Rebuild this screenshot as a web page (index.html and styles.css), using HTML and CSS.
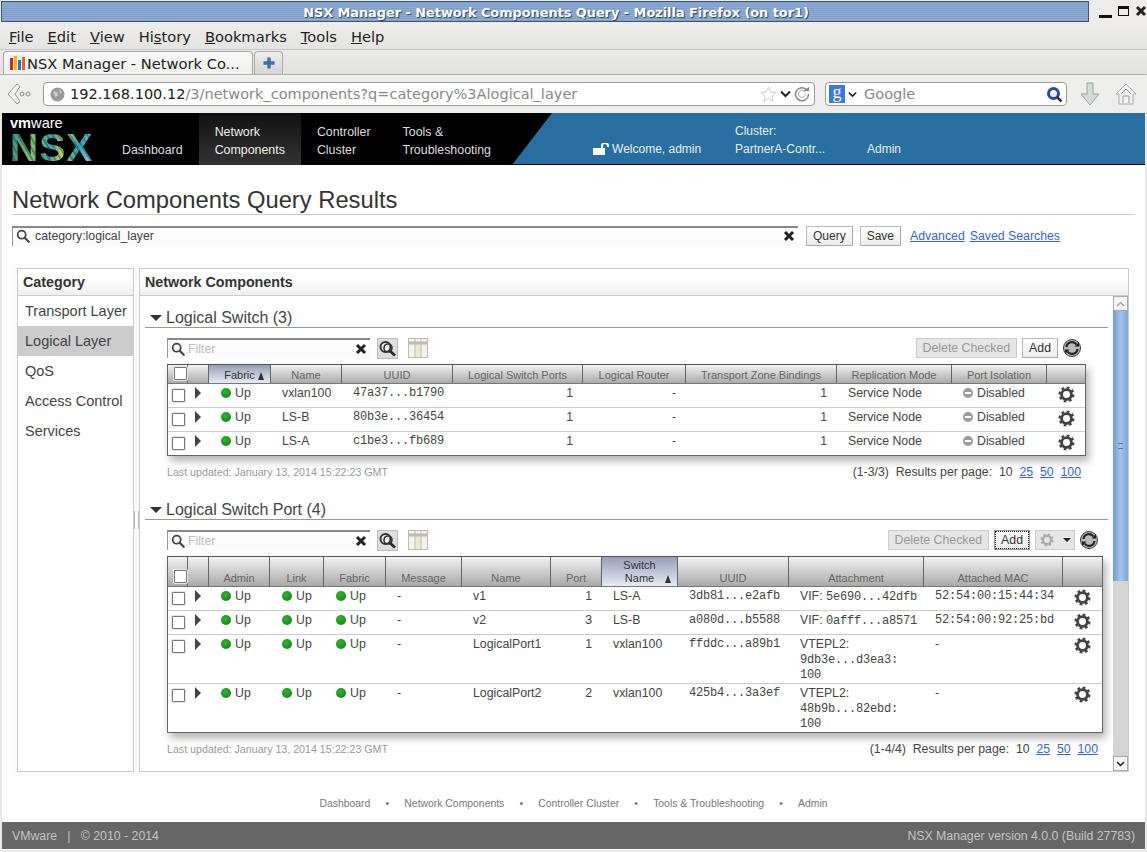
FILE: index.html
```html
<!DOCTYPE html>
<html lang="en">
<head>
    <meta charset="UTF-8">
    <title>NSX Manager - Network Components Query</title>
    <link rel="stylesheet" href="styles.css">
</head>
<body>

    <!-- shared icons -->
    <svg class="defs" width="0" height="0">
        <symbol id="i-gear" viewBox="0 0 18 18">
            <circle cx="9" cy="9" r="5.2" fill="none" stroke="#444" stroke-width="3"/>
            <circle cx="9" cy="9" r="7.2" fill="none" stroke="#444" stroke-width="2.6" stroke-dasharray="2.9 2.75"/>
        </symbol>
        <symbol id="i-search" viewBox="0 0 16 16">
            <circle cx="6.5" cy="6.5" r="4.6" fill="none" stroke="#444" stroke-width="2"/>
            <path d="M10 10l4.5 4.5" stroke="#444" stroke-width="2.6" stroke-linecap="round"/>
        </symbol>
        <symbol id="i-clear" viewBox="0 0 12 12">
            <path d="M2 2l8 8M10 2l-8 8" stroke="#222" stroke-width="3"/>
        </symbol>
        <symbol id="i-zoom" viewBox="0 0 21 21">
            <rect x=".5" y=".5" width="20" height="20" fill="#ddd" stroke="#bbb"/>
            <circle cx="8.5" cy="9" r="5" fill="#eee" stroke="#333" stroke-width="2"/>
            <circle cx="11" cy="10" r="4" fill="none" stroke="#333" stroke-width="1.6"/>
            <path d="M13 13l5 4.5" stroke="#222" stroke-width="2.6"/>
        </symbol>
        <symbol id="i-cols" viewBox="0 0 20 20">
            <rect x=".5" y=".5" width="19" height="19" fill="#f4f3e6" stroke="#bbb"/>
            <rect x="7" y="5" width="6" height="14" fill="#ece9cf"/>
            <path d="M.5 5h19" stroke="#bbb" stroke-width="3"/>
            <path d="M7 .5v19M13 .5v19" stroke="#bbb"/>
        </symbol>
        <symbol id="i-refresh" viewBox="0 0 18 18">
            <circle cx="9" cy="9" r="8.5" fill="#bbb" stroke="#333"/>
            <path d="M3.5 8A5.5 5.5 0 0 1 13.5 5.5" fill="none" stroke="#222" stroke-width="2.2"/>
            <path d="M14.5 10A5.5 5.5 0 0 1 4.5 12.5" fill="none" stroke="#222" stroke-width="2.2"/>
            <path d="M11.5 7.5h4.5v-4.5zM6.5 10.5h-4.5v4.5z" fill="#222"/>
        </symbol>
    </svg>

    <!-- window title -->
    <div class="titlebar">
        <div class="title">NSX Manager - Network Components Query - Mozilla Firefox (on tor1)</div>
        <div class="winbtns">
            <span class="win-min"></span>
            <span class="win-max"></span>
            <svg width="12" height="12"><use href="#i-clear"/></svg>
        </div>
    </div>

    <div class="menubar">
        <span><u>F</u>ile</span>
        <span><u>E</u>dit</span>
        <span><u>V</u>iew</span>
        <span>Hi<u>s</u>tory</span>
        <span><u>B</u>ookmarks</span>
        <span><u>T</u>ools</span>
        <span><u>H</u>elp</span>
    </div>

    <div class="tabbar">
        <div class="tab">
            <svg class="favicon" width="16" height="16" viewBox="0 0 16 16">
                <rect width="16" height="16" fill="#eee"/>
                <rect x="1" y="3" width="3" height="12" fill="#d9262a"/>
                <rect x="5" y="1" width="3" height="14" fill="#f2b705"/>
                <rect x="9" y="5" width="3" height="10" fill="#2a6fc9"/>
                <rect x="13" y="2" width="3" height="13" fill="#e2672a"/>
            </svg>
            <span>NSX Manager - Network Co...</span>
        </div>
        <div class="newtab">
            <svg width="14" height="14" viewBox="0 0 14 14"><path d="M7 1.5v11M1.5 7h11" stroke="#3d6fb0" stroke-width="3.4"/></svg>
        </div>
    </div>

    <div class="navbar">
        <svg class="back" width="24" height="22" viewBox="0 0 24 22">
            <path d="M10 1L1 11l9 10 3-2.500L8 11l5-7.500z" fill="#f2f2f2" stroke="#999"/>
            <circle cx="15" cy="11" r="2" fill="none" stroke="#888"/>
            <circle cx="21" cy="11" r="2" fill="none" stroke="#888"/>
        </svg>
        <div class="urlbar">
            <svg width="15" height="15" viewBox="0 0 15 15"><circle cx="7.5" cy="7.5" r="7" fill="#999"/><path d="M3 4l4 1 1 4-3 1zM9 2l3 3-2 2z" fill="#ccc"/></svg>
            <span class="url"><b>192.168.100.12</b>/3/network_components?q=category%3Alogical_layer</span>
            <svg width="17" height="16" viewBox="0 0 17 16"><path d="M8.5 1l2.3 4.9 5.2.6-3.900 3.600 1.100 5.200-4.700-2.700-4.700 2.700 1.100-5.200L1 6.500l5.200-.6z" fill="#fff" stroke="#ccc"/></svg>
            <svg width="11" height="8" viewBox="0 0 11 8"><path d="M1 1.500l4.500 4.500L10 1.500" fill="none" stroke="#222" stroke-width="2"/></svg>
            <svg width="16" height="16" viewBox="0 0 16 16"><path d="M13 4a6.500 6.500 0 1 0 1.500 4" fill="none" stroke="#888" stroke-width="1.500"/><path d="M11 6a3.500 3.500 0 1 0 .5 2" fill="none" stroke="#aaa"/><path d="M9 5h6V1z" fill="#888"/></svg>
        </div>
        <div class="searchbar">
            <span class="g-box">g</span>
            <svg width="9" height="7" viewBox="0 0 11 8"><path d="M1 1.500l4.500 4.500L10 1.500" fill="none" stroke="#222" stroke-width="2"/></svg>
            <span class="search-hint">Google</span>
            <svg width="17" height="17" viewBox="0 0 17 17"><circle cx="7.500" cy="7.500" r="5" fill="#eef" stroke="#2a4a9a" stroke-width="3"/><path d="M11 11l4.500 4.500" stroke="#333" stroke-width="2.500"/></svg>
        </div>
        <svg class="nav-down" width="20" height="24" viewBox="0 0 20 24"><path d="M7 1h6v11h6l-9 11-9-11h6z" fill="#d5dcd8" stroke="#9aa39e"/></svg>
        <svg class="nav-home" width="22" height="22" viewBox="0 0 22 22"><path d="M11 1L1 11h3v10h14V11h3z" fill="#f3f3f3" stroke="#aaa"/><path d="M8 20v-7h6v7M6 11l5-5 5 5" fill="none" stroke="#999"/></svg>
    </div>

    <div class="app">
        <div class="topnav">
            <div class="logo">
                <div class="vmware"><b>vm</b>ware</div>
                <div class="nsx">NSX</div>
            </div>
            <div class="nav-item">Dashboard</div>
            <div class="nav-item active">Network<br>Components</div>
            <div class="nav-item">Controller<br>Cluster</div>
            <div class="nav-item">Tools &amp;<br>Troubleshooting</div>
            <div class="nav-blue">
                <div class="welcome">
                    <svg width="17" height="12" viewBox="0 0 17 12"><rect y="5" width="12" height="7" fill="#fff"/><path d="M9 5V3a3 3 0 0 1 6 0v1" fill="none" stroke="#fff" stroke-width="2"/></svg>
                    Welcome, admin
                </div>
                <div class="cluster">Cluster:<br>PartnerA-Contr...</div>
                <div class="admin">Admin</div>
            </div>
        </div>

        <div class="page">
            <h1>Network Components Query Results</h1>

            <div class="query-row">
                <div class="query-box">
                    <svg width="14" height="14"><use href="#i-search"/></svg>
                    <span class="query-text">category:logical_layer</span>
                    <svg width="12" height="12"><use href="#i-clear"/></svg>
                </div>
                <button class="btn">Query</button>
                <button class="btn">Save</button>
                <a class="link" href="#">Advanced</a>
                <a class="link" href="#">Saved Searches</a>
            </div>

            <div class="content">
                <div class="panel cat-panel">
                    <div class="panel-head">Category</div>
                    <div class="cat-item">Transport Layer</div>
                    <div class="cat-item active">Logical Layer</div>
                    <div class="cat-item">QoS</div>
                    <div class="cat-item">Access Control</div>
                    <div class="cat-item">Services</div>
                </div>
                <div class="splitter"></div>
                <div class="panel main-panel">
                    <div class="panel-head">Network Components</div>
                    <div class="scroll-wrap">
                        <div class="scroll-area">

                            <!-- Logical Switch -->
                            <div class="section">
                                <div class="section-head"><span class="down-arrow"></span>Logical Switch (3)</div>
                                <div class="section-body w1">
                                    <div class="toolbar">
                                        <div class="filter">
                                            <svg width="14" height="14"><use href="#i-search"/></svg>
                                            <span class="filter-text">Filter</span>
                                            <svg width="12" height="12"><use href="#i-clear"/></svg>
                                        </div>
                                        <svg class="tool-zoom" width="21" height="21"><use href="#i-zoom"/></svg>
                                        <svg class="tool-cols" width="20" height="20"><use href="#i-cols"/></svg>
                                        <button class="btn disabled push">Delete Checked</button>
                                        <button class="btn">Add</button>
                                        <svg width="18" height="18"><use href="#i-refresh"/></svg>
                                    </div>
                                    <div class="grid">
                                        <table>
                                            <colgroup>
                                                <col class="w20"><col class="w21"><col class="w62"><col class="w71"><col class="w111"><col class="w130"><col class="w103"><col class="w151"><col class="w115"><col class="w95"><col class="w38">
                                            </colgroup>
                                            <thead class="short">
                                                <tr>
                                                    <th class="check-cell"><input type="checkbox"></th>
                                                    <th></th>
                                                    <th class="sorted">Fabric<span class="sort-mark"></span></th>
                                                    <th>Name</th>
                                                    <th>UUID</th>
                                                    <th>Logical Switch Ports</th>
                                                    <th>Logical Router</th>
                                                    <th>Transport Zone Bindings</th>
                                                    <th>Replication Mode</th>
                                                    <th>Port Isolation</th>
                                                    <th></th>
                                                </tr>
                                            </thead>
                                            <tbody>
                                                <tr>
                                                    <td class="check-cell"><input type="checkbox"></td>
                                                    <td class="arrow-cell"><span class="row-arrow"></span></td>
                                                    <td><span class="dot"></span>Up</td>
                                                    <td>vxlan100</td>
                                                    <td class="mono">47a37...b1790</td>
                                                    <td class="num">1</td>
                                                    <td class="num">-</td>
                                                    <td class="num">1</td>
                                                    <td>Service Node</td>
                                                    <td><span class="dot off"></span>Disabled</td>
                                                    <td class="gear-cell"><svg width="17" height="17"><use href="#i-gear"/></svg></td>
                                                </tr>
                                                <tr>
                                                    <td class="check-cell"><input type="checkbox"></td>
                                                    <td class="arrow-cell"><span class="row-arrow"></span></td>
                                                    <td><span class="dot"></span>Up</td>
                                                    <td>LS-B</td>
                                                    <td class="mono">80b3e...36454</td>
                                                    <td class="num">1</td>
                                                    <td class="num">-</td>
                                                    <td class="num">1</td>
                                                    <td>Service Node</td>
                                                    <td><span class="dot off"></span>Disabled</td>
                                                    <td class="gear-cell"><svg width="17" height="17"><use href="#i-gear"/></svg></td>
                                                </tr>
                                                <tr>
                                                    <td class="check-cell"><input type="checkbox"></td>
                                                    <td class="arrow-cell"><span class="row-arrow"></span></td>
                                                    <td><span class="dot"></span>Up</td>
                                                    <td>LS-A</td>
                                                    <td class="mono">c1be3...fb689</td>
                                                    <td class="num">1</td>
                                                    <td class="num">-</td>
                                                    <td class="num">1</td>
                                                    <td>Service Node</td>
                                                    <td><span class="dot off"></span>Disabled</td>
                                                    <td class="gear-cell"><svg width="17" height="17"><use href="#i-gear"/></svg></td>
                                                </tr>
                                            </tbody>
                                        </table>
                                    </div>
                                    <div class="grid-foot">
                                        <span class="updated">Last updated: January 13, 2014 15:22:23 GMT</span>
                                        <span class="pager">(1-3/3)&nbsp; Results per page: &nbsp;10 &nbsp;<a href="#">25</a> &nbsp;<a href="#">50</a> &nbsp;<a href="#">100</a></span>
                                    </div>
                                </div>
                            </div>

                            <!-- Logical Switch Port -->
                            <div class="section">
                                <div class="section-head"><span class="down-arrow"></span>Logical Switch Port (4)</div>
                                <div class="section-body w2">
                                    <div class="toolbar">
                                        <div class="filter">
                                            <svg width="14" height="14"><use href="#i-search"/></svg>
                                            <span class="filter-text">Filter</span>
                                            <svg width="12" height="12"><use href="#i-clear"/></svg>
                                        </div>
                                        <svg class="tool-zoom" width="21" height="21"><use href="#i-zoom"/></svg>
                                        <svg class="tool-cols" width="20" height="20"><use href="#i-cols"/></svg>
                                        <button class="btn disabled push">Delete Checked</button>
                                        <button class="btn focused">Add</button>
                                        <div class="btn disabled gear-menu">
                                            <svg class="faded" width="14" height="14" viewBox="0 0 18 18"><use href="#i-gear"/></svg>
                                            <span class="menu-caret"></span>
                                        </div>
                                        <svg width="18" height="18"><use href="#i-refresh"/></svg>
                                    </div>
                                    <div class="grid">
                                        <table>
                                            <colgroup>
                                                <col class="w20"><col class="w21"><col class="w61"><col class="w54"><col class="w62"><col class="w76"><col class="w89"><col class="w51"><col class="w76"><col class="w111"><col class="w135"><col class="w139"><col class="w39">
                                            </colgroup>
                                            <thead class="tall">
                                                <tr>
                                                    <th class="check-cell"><input type="checkbox"></th>
                                                    <th></th>
                                                    <th>Admin</th>
                                                    <th>Link</th>
                                                    <th>Fabric</th>
                                                    <th>Message</th>
                                                    <th>Name</th>
                                                    <th>Port</th>
                                                    <th class="sorted">Switch<br>Name<span class="sort-mark"></span></th>
                                                    <th>UUID</th>
                                                    <th>Attachment</th>
                                                    <th>Attached MAC</th>
                                                    <th></th>
                                                </tr>
                                            </thead>
                                            <tbody>
                                                <tr>
                                                    <td class="check-cell"><input type="checkbox"></td>
                                                    <td class="arrow-cell"><span class="row-arrow"></span></td>
                                                    <td><span class="dot"></span>Up</td>
                                                    <td><span class="dot"></span>Up</td>
                                                    <td><span class="dot"></span>Up</td>
                                                    <td>-</td>
                                                    <td>v1</td>
                                                    <td class="num">1</td>
                                                    <td>LS-A</td>
                                                    <td class="mono">3db81...e2afb</td>
                                                    <td>VIF: <span class="mono">5e690...42dfb</span></td>
                                                    <td class="mono">52:54:00:15:44:34</td>
                                                    <td class="gear-cell"><svg width="17" height="17"><use href="#i-gear"/></svg></td>
                                                </tr>
                                                <tr>
                                                    <td class="check-cell"><input type="checkbox"></td>
                                                    <td class="arrow-cell"><span class="row-arrow"></span></td>
                                                    <td><span class="dot"></span>Up</td>
                                                    <td><span class="dot"></span>Up</td>
                                                    <td><span class="dot"></span>Up</td>
                                                    <td>-</td>
                                                    <td>v2</td>
                                                    <td class="num">3</td>
                                                    <td>LS-B</td>
                                                    <td class="mono">a080d...b5588</td>
                                                    <td>VIF: <span class="mono">0afff...a8571</span></td>
                                                    <td class="mono">52:54:00:92:25:bd</td>
                                                    <td class="gear-cell"><svg width="17" height="17"><use href="#i-gear"/></svg></td>
                                                </tr>
                                                <tr>
                                                    <td class="check-cell"><input type="checkbox"></td>
                                                    <td class="arrow-cell"><span class="row-arrow"></span></td>
                                                    <td><span class="dot"></span>Up</td>
                                                    <td><span class="dot"></span>Up</td>
                                                    <td><span class="dot"></span>Up</td>
                                                    <td>-</td>
                                                    <td>LogicalPort1</td>
                                                    <td class="num">1</td>
                                                    <td>vxlan100</td>
                                                    <td class="mono">ffddc...a89b1</td>
                                                    <td>VTEPL2:<br><span class="mono">9db3e...d3ea3:<br>100</span></td>
                                                    <td>-</td>
                                                    <td class="gear-cell"><svg width="17" height="17"><use href="#i-gear"/></svg></td>
                                                </tr>
                                                <tr>
                                                    <td class="check-cell"><input type="checkbox"></td>
                                                    <td class="arrow-cell"><span class="row-arrow"></span></td>
                                                    <td><span class="dot"></span>Up</td>
                                                    <td><span class="dot"></span>Up</td>
                                                    <td><span class="dot"></span>Up</td>
                                                    <td>-</td>
                                                    <td>LogicalPort2</td>
                                                    <td class="num">2</td>
                                                    <td>vxlan100</td>
                                                    <td class="mono">425b4...3a3ef</td>
                                                    <td>VTEPL2:<br><span class="mono">48b9b...82ebd:<br>100</span></td>
                                                    <td>-</td>
                                                    <td class="gear-cell"><svg width="17" height="17"><use href="#i-gear"/></svg></td>
                                                </tr>
                                            </tbody>
                                        </table>
                                    </div>
                                    <div class="grid-foot">
                                        <span class="updated">Last updated: January 13, 2014 15:22:23 GMT</span>
                                        <span class="pager">(1-4/4)&nbsp; Results per page: &nbsp;10 &nbsp;<a href="#">25</a> &nbsp;<a href="#">50</a> &nbsp;<a href="#">100</a></span>
                                    </div>
                                </div>
                            </div>

                        </div>
                        <div class="scrollbar">
                            <div class="sb-btn"><svg width="9" height="6" viewBox="0 0 9 6"><path d="M1 5l3.500-3.500L8 5" fill="none" stroke="#aaa" stroke-width="1.500"/></svg></div>
                            <div class="sb-thumb"><span class="sb-grip"></span></div>
                            <div class="sb-track"></div>
                            <div class="sb-btn"><svg width="9" height="6" viewBox="0 0 9 6"><path d="M1 1l3.500 3.500L8 1" fill="none" stroke="#222" stroke-width="1.500"/></svg></div>
                        </div>
                    </div>
                </div>
            </div>

            <div class="foot-links">
                <span>Dashboard</span><i>&bull;</i>
                <span>Network Components</span><i>&bull;</i>
                <span>Controller Cluster</span><i>&bull;</i>
                <span>Tools &amp; Troubleshooting</span><i>&bull;</i>
                <span>Admin</span>
            </div>
        </div>

        <div class="footer">
            <span>VMware &nbsp;&nbsp;|&nbsp;&nbsp; &copy; 2010 - 2014</span>
            <span>NSX Manager version 4.0.0 (Build 27783)</span>
        </div>
    </div>

</body>
</html>
```

FILE: styles.css
```css
* { box-sizing: border-box; }
html, body { margin: 0; height: 100%; }
body {
    width: 1147px;
    height: 852px;
    overflow: hidden;
    background: #e8e8e8;
    font-family: "Liberation Sans", Arial, sans-serif;
    font-size: 12.3px;
    color: #444;
}
.defs { position: absolute; }
svg { flex: none; display: block; }

/* window chrome */
.titlebar { display: flex; height: 22px; padding-top: 1px; background: #eeedeb; }
.title {
    width: 1089px;
    margin-left: 1px;
    padding-left: 22px;
    height: 21px;
    border: 1px solid #3d5578;
    background: repeating-linear-gradient(#7f9fcb 0, #7f9fcb 1px, #8fadd5 1px, #8fadd5 2px);
    color: #fff;
    font-family: "DejaVu Sans", sans-serif;
    font-size: 12.85px;
    font-weight: bold;
    line-height: 21px;
    text-align: center;
    text-shadow: 1px 1px 1px #2b3f5c;
}
.winbtns { display: flex; align-items: center; padding-left: 10px; gap: 6px; height: 20px; }
.win-min { width: 13px; height: 3px; background: #111; margin-top: 10px; }
.win-max { width: 11px; height: 10px; border: 1px solid #111; border-top-width: 3px; }

.menubar {
    display: flex;
    gap: 14px;
    height: 28px;
    padding: 6px 0 0 9px;
    background: linear-gradient(#eeedeb, #e4e4e2);
    border-bottom: 1px solid #c8c8c6;
    font-family: "DejaVu Sans", sans-serif;
    font-size: 14.67px;
    color: #222;
}
.tabbar {
    display: flex;
    align-items: flex-end;
    height: 25px;
    padding-left: 3px;
    gap: 1px;
    background: linear-gradient(#ebebe9, #e2e2e0);
    border-bottom: 1px solid #b4b4b2;
}
.tab {
    display: flex;
    align-items: center;
    gap: 2px;
    width: 250px;
    height: 23px;
    padding-left: 5px;
    background: linear-gradient(#fafafa, #eeeeec);
    border: 1px solid #aaa;
    border-bottom: 0;
    border-radius: 4px 4px 0 0;
    font-family: "DejaVu Sans", sans-serif;
    font-size: 14.67px;
    color: #222;
}
.newtab {
    display: flex;
    align-items: center;
    justify-content: center;
    width: 29px;
    height: 23px;
    background: linear-gradient(#eee, #d5d5d3);
    border: 1px solid #aaa;
    border-bottom: 0;
    border-radius: 4px 4px 0 0;
}
.navbar {
    display: flex;
    align-items: center;
    height: 38px;
    padding: 0 0 0 7px;
    background: #eeeeec;
}
.back { margin-right: 12px; }
.urlbar, .searchbar {
    display: flex;
    align-items: center;
    height: 24px;
    background: #fff;
    border: 1px solid #999;
    border-radius: 4px;
    font-family: "DejaVu Sans", sans-serif;
    font-size: 14.53px;
}
.urlbar { width: 772px; padding: 0 4px 0 6px; gap: 3px; }
.url { flex: 1; margin-left: 2px; color: #888; white-space: nowrap; }
.url b { font-weight: normal; color: #222; }
.searchbar { width: 242px; margin-left: 10px; padding: 0 3px 0 3px; gap: 3px; }
.g-box {
    width: 16px;
    height: 18px;
    background: #3b78e7;
    color: #fff;
    font-family: "Liberation Serif", serif;
    font-size: 18px;
    line-height: 14px;
    text-align: center;
}
.search-hint { flex: 1; margin-left: 4px; color: #888; }
.nav-down { margin-left: 13px; }
.nav-home { margin-left: 15px; }

/* app header */
.app { display: flex; flex-direction: column; margin: 0 2px; background: #fff; height: 737px; }
.topnav {
    display: flex;
    flex: none;
    height: 52px;
    background: #000;
    color: #ddd;
    font-size: 12.4px;
    line-height: 18px;
}
.logo { width: 104px; padding: 4px 0 0 8px; }
.vmware { color: #fff; font-size: 14.6px; line-height: 13px; }
.nsx {
    width: 85px;
    margin-top: 2px;
    font-size: 39px;
    font-weight: bold;
    line-height: 31px;
    letter-spacing: 1px;
    color: transparent;
    background:
        repeating-linear-gradient(60deg, rgba(0, 40, 60, .35) 0 2px, transparent 2px 5px),
        linear-gradient(100deg, #2f8f8f, #7fc36a 28%, #3aa0a8 48%, #c9d45a 62%, #2c9fb0 78%, #9fd6e6);
    -webkit-background-clip: text;
    background-clip: text;
}
.nav-item { display: flex; align-items: flex-end; padding: 0 16px 6px; }
.nav-item.active { background: linear-gradient(#111, #333); color: #eee; }
.nav-blue {
    flex: 1;
    display: flex;
    align-items: flex-end;
    margin-left: 5px;
    padding: 0 0 6px 81px;
    background: #296ea0;
    border-bottom: 1px solid #000;
    clip-path: polygon(40px 0, 100% 0, 100% 100%, 0 100%);
    color: #e6eef4;
    font-size: 12px;
}
.welcome { display: flex; align-items: center; gap: 2px; width: 142px; }
.cluster { width: 132px; }

/* page */
.page { flex: none; height: 657px; padding: 21px 10px 0; background: #fff; }
h1 {
    margin: 0;
    height: 29px;
    border-bottom: 1px solid #ccc;
    font-size: 23.75px;
    font-weight: normal;
    line-height: 27px;
    color: #333;
}
.query-row { display: flex; align-items: center; height: 21px; margin-top: 10px; }
.query-box {
    display: flex;
    align-items: center;
    width: 786px;
    height: 20px;
    padding: 0 3px 1px;
    background: #fbfbfb;
    border-top: 2px solid #888;
    border-left: 1px solid #999;
}
.query-text { flex: 1; margin-left: 5px; }
.btn {
    height: 20px;
    padding: 0 6px;
    background: linear-gradient(#fff, #ececec);
    border: 1px solid #bbb;
    border-bottom-color: #aaa;
    border-right-color: #aaa;
    font-family: inherit;
    font-size: 12px;
    color: #333;
}
.toolbar .btn { font-size: 12.3px; }
.query-row .btn { margin-left: 7px; }
.query-row .btn:first-of-type { margin-left: 8px; }
.link { margin-left: 5px; color: #3366dd; }
.query-row .btn + .link { margin-left: 9px; }

.content {
    display: flex;
    height: 514px;
    margin-top: 17px;
    padding: 5px;
    background: #fbfbfb;
}
.panel { background: #fff; border: 1px solid #ccc; }
.cat-panel { width: 117px; }
.main-panel { width: 990px; display: flex; flex-direction: column; }
.splitter { display: flex; align-items: center; justify-content: center; width: 5px; }
.splitter::before {
    content: "";
    width: 3px;
    height: 18px;
    border-left: 1px solid #bbb;
    border-right: 1px solid #bbb;
}
.panel-head {
    flex: none;
    height: 27px;
    padding-left: 5px;
    background: linear-gradient(#fff 40%, #eee);
    border-bottom: 1px solid #ccc;
    font-size: 14.3px;
    font-weight: bold;
    line-height: 26px;
    color: #333;
}
.cat-item { height: 30px; padding-left: 7px; font-size: 14.5px; line-height: 30px; }
.cat-item.active { background: #ccc; }

.scroll-wrap { display: flex; flex: 1; min-height: 0; }
.scroll-area { flex: 1; padding: 12px 5px 0; overflow: hidden; }
.scrollbar { display: flex; flex-direction: column; flex: none; width: 15px; }
.sb-btn {
    display: flex;
    align-items: center;
    justify-content: center;
    height: 15px;
    background: #f4f4f4;
    border: 1px solid #aaa;
}
.sb-thumb {
    display: flex;
    align-items: center;
    justify-content: center;
    height: 270px;
    background: linear-gradient(90deg, #6f9bd0, #a5c4e8 50%, #7ea6d8);
}
.sb-grip { width: 5px; height: 6px; border-top: 1px solid #57769c; border-bottom: 1px solid #57769c; }
.sb-track { flex: 1; background: #d4d4d2; }

/* sections */
.section { margin-bottom: 20px; }
.section-head {
    display: flex;
    align-items: center;
    height: 20px;
    border-bottom: 1px solid #999;
    font-size: 16px;
    line-height: 18px;
    color: #444;
}
.down-arrow {
    width: 0;
    height: 0;
    margin: 0 4px 0 5px;
    border: 6px solid transparent;
    border-top: 6px solid #333;
    border-bottom: 0;
}
.section-body { margin-left: 22px; }
.w1 { width: 919px; }
.w2 { width: 936px; }
.toolbar { display: flex; align-items: center; gap: 5px; height: 20px; margin-top: 10px; padding-right: 5px; }
.filter {
    display: flex;
    align-items: center;
    width: 203px;
    height: 20px;
    padding: 0 3px 1px;
    background: #fbfbfb;
    border-top: 2px solid #888;
    border-left: 1px solid #999;
}
.filter-text { flex: 1; margin-left: 3px; color: #bbb; }
.tool-zoom { margin-left: 2px; }
.tool-cols { margin-left: 5px; }
.push { margin-left: auto; }
.btn.disabled { background: #e6e6e6; border-color: #ccc; color: #999; }
.btn.focused { outline: 1px dotted #222; outline-offset: -2px; border-color: #999; }
.gear-menu { display: flex; align-items: center; justify-content: center; gap: 9px; width: 40px; padding: 0; }
.faded { opacity: .35; }
.menu-caret { width: 0; height: 0; border: 4px solid transparent; border-top: 4px solid #222; border-bottom: 0; }

/* grids */
.grid {
    margin-top: 6px;
    background: #fff;
    border: 1px solid #666;
    border-top-color: #555;
    box-shadow: 3px 5px 8px rgba(0, 0, 0, .3);
}
table { width: 100%; border-collapse: separate; border-spacing: 0; table-layout: fixed; }
.w20 { width: 20px; } .w21 { width: 21px; } .w38 { width: 38px; } .w39 { width: 39px; }
.w51 { width: 51px; } .w54 { width: 54px; } .w61 { width: 61px; } .w62 { width: 62px; }
.w71 { width: 71px; } .w76 { width: 76px; } .w89 { width: 89px; } .w95 { width: 95px; }
.w103 { width: 103px; } .w111 { width: 111px; } .w115 { width: 115px; } .w130 { width: 130px; }
.w135 { width: 135px; } .w139 { width: 139px; } .w151 { width: 151px; }
th {
    position: relative;
    padding: 0 2px 1px;
    background: linear-gradient(#f2f2f2, #aaa);
    border-right: 1px solid #666;
    border-bottom: 1px solid #777;
    font-size: 11px;
    font-weight: normal;
    line-height: 13px;
    color: #666;
    vertical-align: bottom;
}
th:last-child { border-right: 0; }
.short th { height: 19px; }
.tall th { height: 30px; }
th.sorted { background: linear-gradient(#979fb8, #e6ebf6); color: #333; }
.sort-mark {
    position: absolute;
    right: 6px;
    bottom: 3px;
    width: 0;
    height: 0;
    border: 3px solid transparent;
    border-bottom: 8px solid #333;
    border-top: 0;
}
td {
    height: 24px;
    padding: 2px 10px 1px 11px;
    border-bottom: 1px solid #ccc;
    line-height: 15px;
    vertical-align: top;
    white-space: nowrap;
}
tbody tr:last-child td { height: 23px; border-bottom: 0; }
td.num { padding-right: 10px; text-align: right; }
.mono { font-family: "Liberation Mono", monospace; font-size: 12px; letter-spacing: -.2px; line-height: 1; }
td.mono { line-height: 15px; }
td.check-cell { padding: 0; vertical-align: top; }
input[type="checkbox"] {
    appearance: none;
    display: block;
    width: 13px;
    height: 13px;
    margin: 5px 0 0 4px;
    background: #fff;
    border: 1px solid #777;
    border-radius: 1px;
    box-shadow: 0 0 0 1px #e4e4e4;
}
th input[type="checkbox"] { margin: 0 0 2px 4px; }
td.arrow-cell { padding: 3px 0 0 7px; }
.row-arrow {
    display: block;
    width: 0;
    height: 0;
    border: 6px solid transparent;
    border-left: 6px solid #444;
    border-right: 0;
}
td.gear-cell { padding: 2px 0 0 11px; }
.dot {
    display: inline-block;
    width: 10px;
    height: 10px;
    margin: 0 4px 0 1px;
    border-radius: 50%;
    background: radial-gradient(circle at 40% 35%, #2fb52f, #0b7d0b);
    vertical-align: -1px;
}
.dot.off {
    margin-left: 0;
    background: linear-gradient(#fff, #fff) center / 6px 2px no-repeat, #999;
}
.grid-foot { display: flex; justify-content: space-between; align-items: center; height: 16px; margin-top: 8px; padding-right: 5px; }
.updated { font-size: 10.67px; color: #999; }
.pager a { color: #3366dd; }

.foot-links { display: flex; justify-content: center; margin-top: 21px; font-size: 10.4px; color: #777; }
.foot-links i { width: 34px; font-style: normal; text-align: center; }

.footer {
    display: flex;
    flex: none;
    justify-content: space-between;
    align-items: center;
    height: 27px;
    padding: 0 10px;
    background: #666;
    color: #c4c4c4;
}
```
